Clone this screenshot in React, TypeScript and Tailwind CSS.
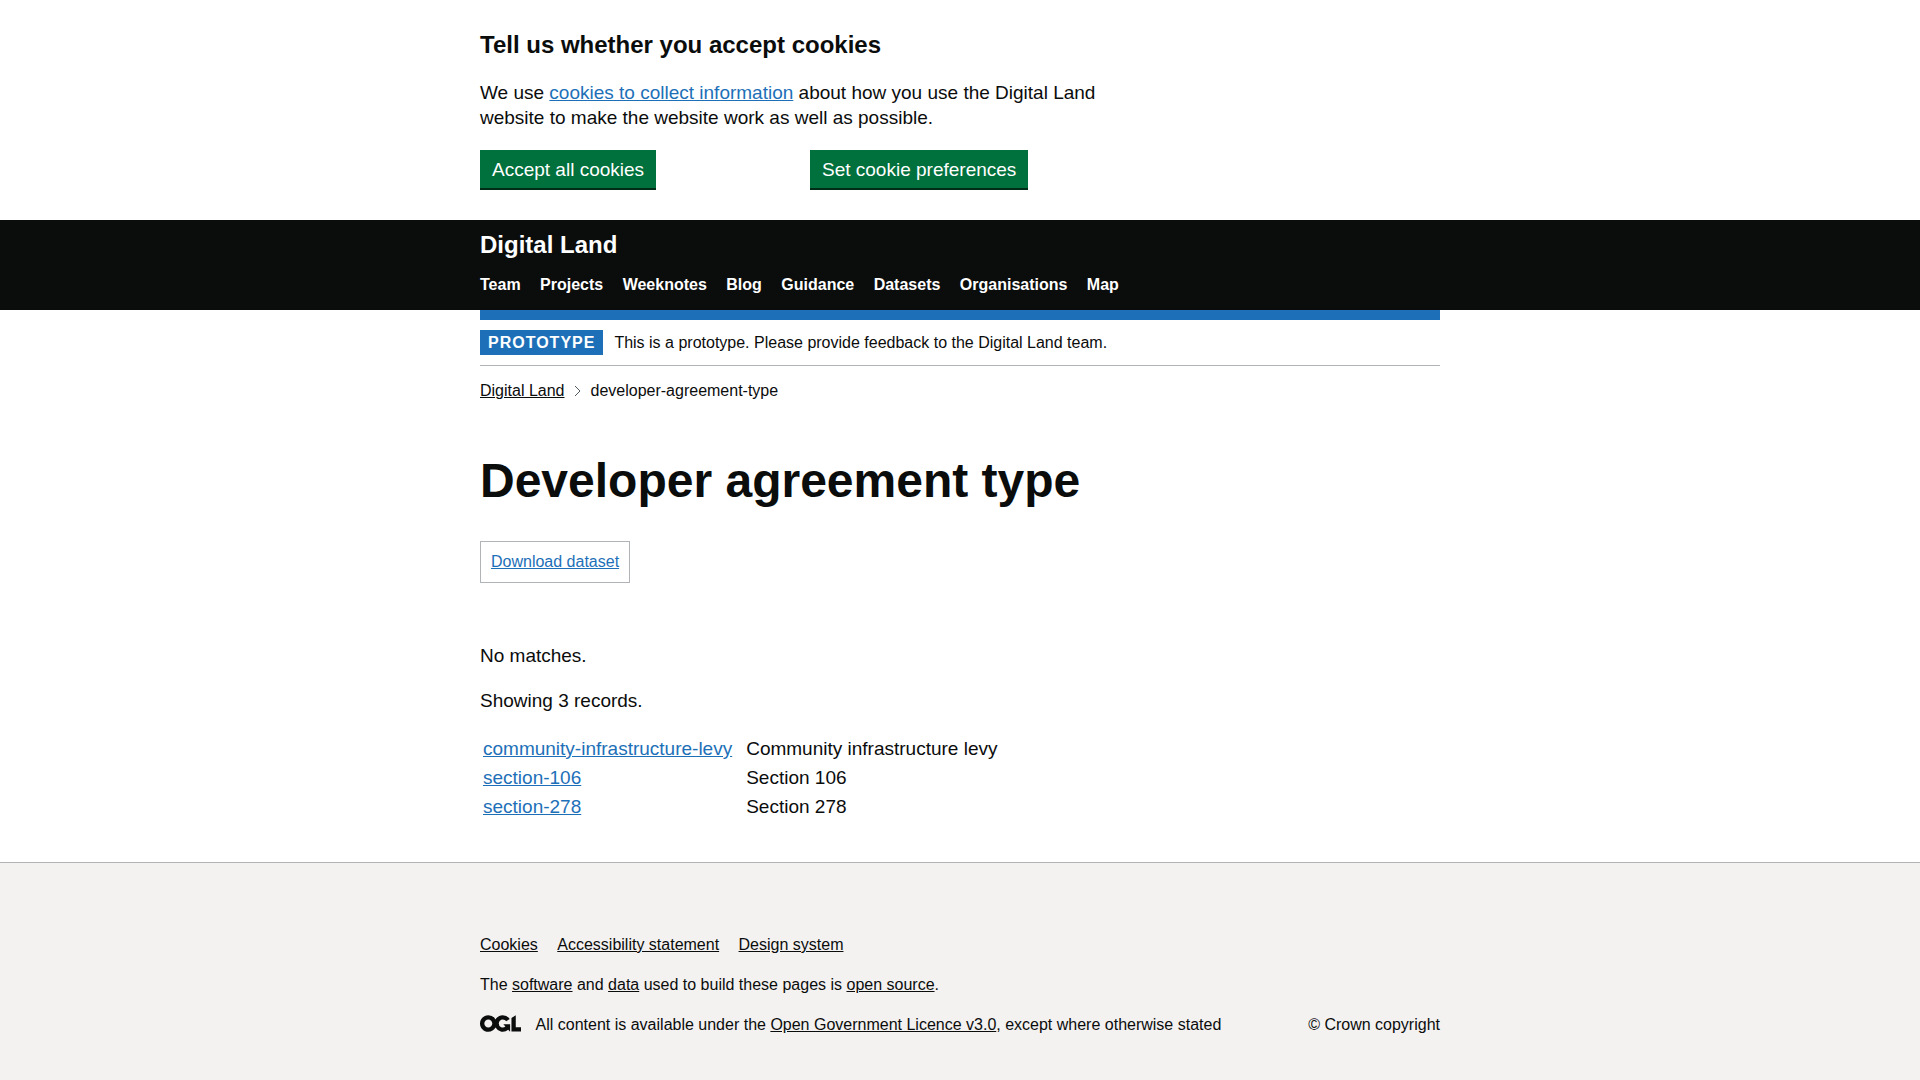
import { Fragment } from 'react';
import type { ReactNode } from 'react';

const navItems = ['Team', 'Projects', 'Weeknotes', 'Blog', 'Guidance', 'Datasets', 'Organisations', 'Map'];

const footerItems = ['Cookies', 'Accessibility statement', 'Design system'];

const records = [
  { id: 'community-infrastructure-levy', name: 'Community infrastructure levy' },
  { id: 'section-106', name: 'Section 106' },
  { id: 'section-278', name: 'Section 278' },
];

function Container({ children }: { children: ReactNode }) {
  return <div className="mx-auto w-full max-w-[1020px] px-[30px]">{children}</div>;
}

function Link({ children, muted = false }: { children: ReactNode; muted?: boolean }) {
  return (
    <a href="#" className={muted ? 'text-[#0b0c0c] underline' : 'text-[#1d70b8] underline'}>
      {children}
    </a>
  );
}

function GreenButton({ children }: { children: ReactNode }) {
  return (
    <button
      type="button"
      className="bg-[#00703c] px-3 pt-2.5 pb-[9px] text-[19px] leading-[19px] text-white shadow-[0_2px_0_#002d18]"
    >
      {children}
    </button>
  );
}

function CookieBanner() {
  return (
    <section aria-label="Cookie banner" className="pt-[30px] pb-8">
      <Container>
        <div className="max-w-[630px]">
          <h2 className="mb-5 text-[24px] leading-[30px] font-bold">Tell us whether you accept cookies</h2>
          <p className="mb-5">
            We use <Link>cookies to collect information</Link> about how you use the Digital Land website to make the
            website work as well as possible.
          </p>
          <div className="grid grid-cols-2 items-start justify-items-start gap-[30px]">
            <GreenButton>Accept all cookies</GreenButton>
            <GreenButton>Set cookie preferences</GreenButton>
          </div>
        </div>
      </Container>
    </section>
  );
}

function Header() {
  return (
    <header className="bg-[#0b0c0c] pt-2.5 pb-[15px] text-white">
      <Container>
        <a href="#" className="inline-block text-[24px] leading-[30px] font-bold">
          Digital Land
        </a>
        <nav aria-label="Main" className="mt-[15px]">
          <ul className="text-[16px] leading-5 font-bold">
            {navItems.map((item) => (
              <Fragment key={item}>
                <li className="mr-[15px] inline-block">
                  <a href="#">{item}</a>
                </li>{' '}
              </Fragment>
            ))}
          </ul>
        </nav>
      </Container>
    </header>
  );
}

function OglLogo() {
  return (
    <svg
      aria-hidden="true"
      focusable="false"
      viewBox="0 0 483.2 195.7"
      width="41"
      height="17"
      className="mr-[11px] inline-block align-top"
      fill="currentColor"
    >
      <path d="M421.5 142.8V.1l-50.7 32.3v161.1h112.4v-50.7zm-122.3-9.6A47.12 47.12 0 0 1 221 97.8c0-26 21.1-47.1 47.1-47.1 16.7 0 31.4 8.7 39.7 21.8l42.7-27.2A97.63 97.63 0 0 0 268.1 0c-36.5 0-68.3 20.1-85.1 49.7A98 98 0 0 0 97.8 0C43.9 0 0 43.9 0 97.8s43.9 97.8 97.8 97.8c36.5 0 68.3-20.1 85.1-49.7a97.76 97.76 0 0 0 149.6 25.4l19.4 22.2h3v-87.8h-80l24.3 27.5zM97.8 145c-26 0-47.1-21.1-47.1-47.1s21.1-47.1 47.1-47.1 47.1 21.1 47.1 47.1S123.8 145 97.8 145" />
    </svg>
  );
}

function Footer() {
  return (
    <footer className="grow border-t border-[#b1b4b6] bg-[#f3f2f1] pt-[72px] pb-[25px] text-[16px] leading-5">
      <Container>
        <ul className="mb-5">
          {footerItems.map((item) => (
            <Fragment key={item}>
              <li className="mr-[15px] inline-block">
                <Link muted>{item}</Link>
              </li>{' '}
            </Fragment>
          ))}
        </ul>
        <p className="mb-5">
          The <Link muted>software</Link> and <Link muted>data</Link> used to build these pages is{' '}
          <Link muted>open source</Link>.
        </p>
        <div className="flex flex-wrap items-start justify-between gap-x-[30px]">
          <p>
            <OglLogo /> All content is available under the <Link muted>Open Government Licence v3.0</Link>, except
            where otherwise stated
          </p>
          <a href="#">© Crown copyright</a>
        </div>
      </Container>
    </footer>
  );
}

export default function App() {
  return (
    <div className="flex min-h-screen flex-col bg-white font-['Liberation_Sans',Arial,sans-serif] text-[19px] leading-[25px] text-[#0b0c0c]">
      <CookieBanner />
      <Header />
      <Container>
        <div className="h-2.5 bg-[#1d70b8]" />
        <div className="flex items-center border-b border-[#b1b4b6] py-2.5 text-[16px] leading-5">
          <strong className="mr-[11px] bg-[#1d70b8] px-2 pt-[3px] pb-0.5 tracking-[1px] text-white uppercase">
            Prototype
          </strong>
          <span>This is a prototype. Please provide feedback to the Digital Land team.</span>
        </div>
        <nav aria-label="Breadcrumb" className="mt-[15px] text-[16px] leading-5">
          <ol className="flex items-center">
            <li>
              <Link muted>Digital Land</Link>
            </li>
            <li className="flex items-center">
              <svg
                aria-hidden="true"
                viewBox="0 0 7 12"
                width="7"
                height="12"
                className="mr-2.5 ml-[9px]"
                fill="none"
                stroke="#505a5f"
              >
                <path d="M1 1l5 5-5 5" />
              </svg>
              developer-agreement-type
            </li>
          </ol>
        </nav>
        <main className="pt-[55px] pb-10">
          <h1 className="mb-[35px] text-[48px] leading-[50px] font-bold">Developer agreement type</h1>
          <div className="mb-[60px] w-fit border border-[#b1b4b6] p-2.5 text-[16px] leading-5">
            <Link>Download dataset</Link>
          </div>
          <p className="mb-5">No matches.</p>
          <p className="mb-5">Showing 3 records.</p>
          <table className="border-separate border-spacing-0.5">
            <tbody>
              {records.map((record) => (
                <tr key={record.id}>
                  <td className="py-px pr-[11px] pl-px">
                    <Link>{record.id}</Link>
                  </td>
                  <td className="p-px">{record.name}</td>
                </tr>
              ))}
            </tbody>
          </table>
        </main>
      </Container>
      <Footer />
    </div>
  );
}
